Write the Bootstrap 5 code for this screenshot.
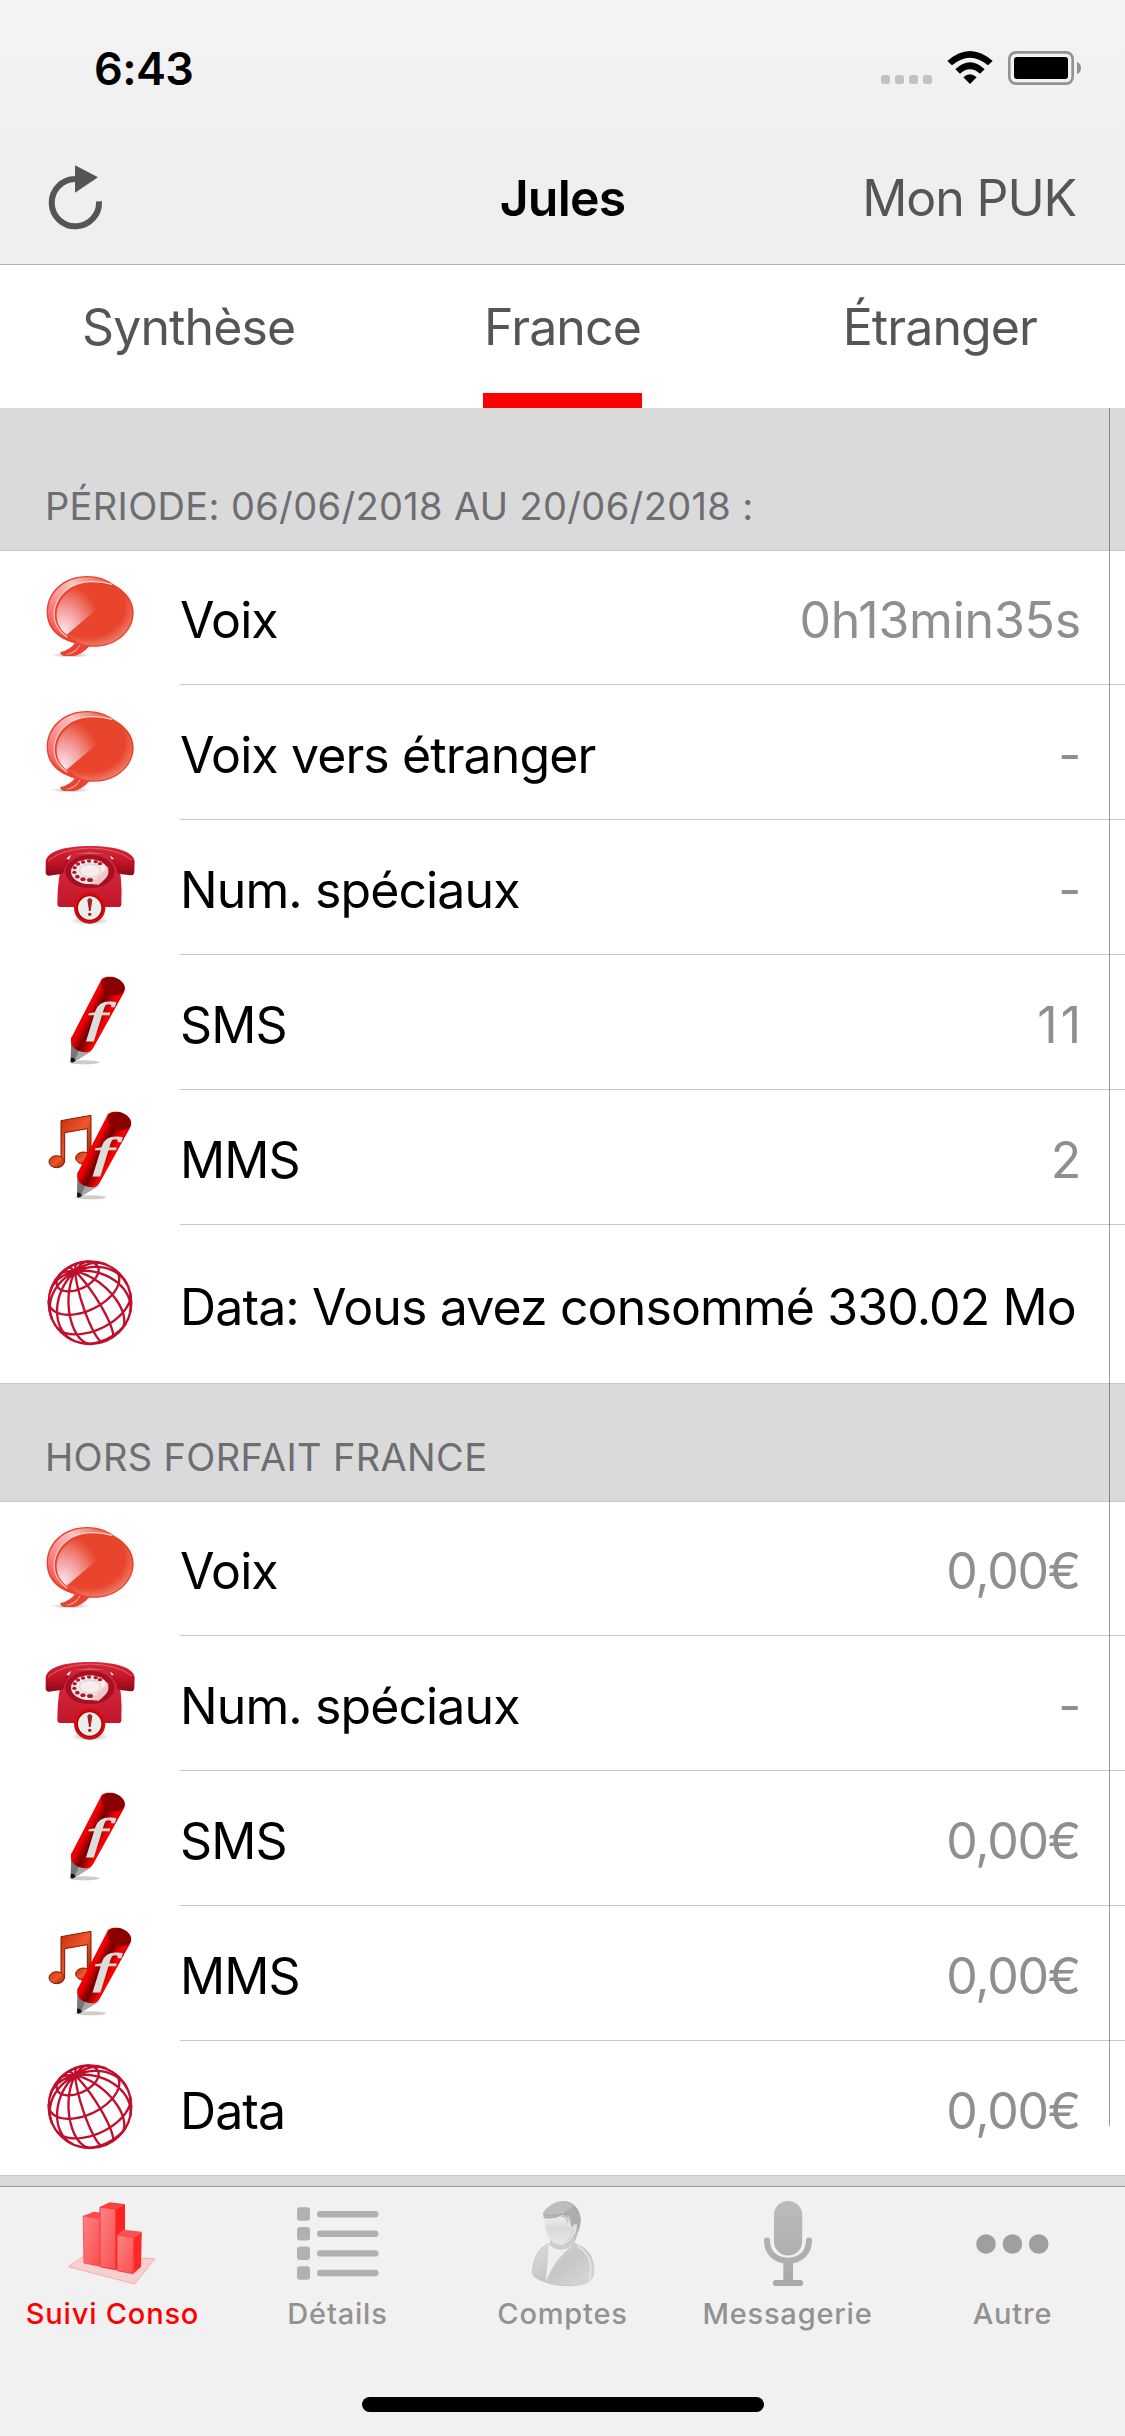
<!DOCTYPE html>
<html lang="fr">
<head>
  <meta charset="UTF-8">
  <meta name="viewport" content="width=device-width, initial-scale=1.0">
  <title>Suivi Conso</title>
  <link href="https://cdn.jsdelivr.net/npm/bootstrap@5.3.0/dist/css/bootstrap.min.css" rel="stylesheet">
  <style>
    body {
      font-family: Inter, "Liberation Sans", sans-serif;
      font-size: 50px;
      line-height: 60px;
      letter-spacing: -0.9px;
      color: #000;
      background: #dadada;
      width: 1125px;
      height: 2436px;
      overflow: hidden;
    }
    svg { display: block; flex-shrink: 0; }
    .icon-sprite { overflow: visible; }
    .top-bar {
      height: 265px;
      background: linear-gradient(#f4f4f4, #efefef 60%, #efefef);
      border-bottom: 1px solid #b2b2b2;
    }
    .status-row { height: 132px; padding: 5px 0 0 94px; }
    .clock { font-size: 45px; font-weight: 600; letter-spacing: -0.6px; }
    .title-row { height: 132px; }
    .title-row > div { width: 375px; }
    .title-row svg { margin-top: 4px; }
    .screen-title { font-weight: 600; letter-spacing: -0.8px; }
    .grey-text { color: #555; }
    .puk { padding-right: 49px; letter-spacing: -1.1px; }
    .tab-row { height: 143px; background: #fff; padding: 0 82px; }
    .tab-item { padding-top: 32px; color: #555; height: 143px; letter-spacing: -0.9px; }
    .tab-item.active { border-bottom: 15px solid #f00; width: 159px; }
    .tab-item:last-child { padding-right: 6px; }
    .section-title {
      font-size: 38px;
      line-height: 46px;
      letter-spacing: 0.35px;
      color: #6d6d72;
      padding: 0 45px 21px;
    }
    .first-title { height: 142px; }
    .second-title { height: 118px; border-top: 1px solid #c8c7cc; }
    .conso-list { background: #fff; border-top: 1px solid #c8c7cc; }
    .conso-row { height: 135px; padding-left: 30px; }
    .conso-row:first-child { height: 134px; }
    .conso-row:first-child svg { margin-top: -1px; }
    .conso-row svg { width: 130px; height: 135px; }
    .conso-text {
      margin-left: 20px;
      padding: 6px 45px 0 0;
      border-bottom: 1px solid #c8c7cc;
    }
    .conso-row:first-child .conso-text { padding-top: 4px; }
    .conso-row:last-child .conso-text { border-bottom: 0; }
    .conso-row.tall { height: 158px; }
    .conso-row.short { height: 134px; }
    .tall .conso-text { padding-top: 6px; letter-spacing: -0.87px; }
    .amount { color: #8e8e93; letter-spacing: -1.2px; }
    .amount.duration { letter-spacing: -0.2px; margin-right: -1px; }
    .amount.count { letter-spacing: 3px; margin-right: -4px; }
    .list-end { height: 11px; border-top: 1px solid #c8c7cc; }
    .scroll-line {
      position: absolute;
      left: 1109px;
      top: 408px;
      width: 1px;
      height: 1718px;
      background: rgba(0, 0, 0, 0.4);
    }
    .bottom-bar { height: 250px; background: #f1f1f1; border-top: 1px solid #999; }
    .bottom-item {
      font-size: 29px;
      font-weight: 500;
      line-height: 36px;
      letter-spacing: 0.8px;
      color: #929292;
      height: 210px;
    }
    .bottom-item.active { color: #f00; }
    .bottom-item svg { width: 225px; height: 108px; margin-bottom: 1px; }
    .home-line { width: 402px; height: 15px; border-radius: 8px; background: #000; }
  </style>
</head>
<body>
  <!-- Shared icons -->
  <svg width="0" height="0" class="icon-sprite position-absolute">
    <defs>
      <linearGradient id="rim" x1="0" y1="1" x2="1" y2="0">
        <stop offset="0" stop-color="#f0453a"/><stop offset=".35" stop-color="#fb8a90"/>
        <stop offset=".65" stop-color="#fbc3c0"/><stop offset="1" stop-color="#e9472f"/>
      </linearGradient>
      <radialGradient id="gloss" cx=".15" cy=".95" r="1">
        <stop offset="0" stop-color="#ffe6f2"/><stop offset=".5" stop-color="#f39b99"/><stop offset="1" stop-color="#e8452c"/>
      </radialGradient>
      <radialGradient id="bubble" cx=".42" cy=".38" r=".65">
        <stop offset=".75" stop-color="#e8452c"/><stop offset="1" stop-color="#ef7e6d"/>
      </radialGradient>
      <radialGradient id="shade">
        <stop offset="0" stop-color="#777" stop-opacity=".7"/><stop offset="1" stop-color="#999" stop-opacity="0"/>
      </radialGradient>
      <linearGradient id="phone" x1="0" y1="0" x2="0" y2="1">
        <stop offset="0" stop-color="#9e0d1c"/><stop offset=".35" stop-color="#d22438"/><stop offset="1" stop-color="#c0152a"/>
      </linearGradient>
      <linearGradient id="handset" x1="0" y1="0" x2="0" y2="1">
        <stop offset="0" stop-color="#d32a38"/><stop offset=".5" stop-color="#c41628"/><stop offset="1" stop-color="#8e0818"/>
      </linearGradient>
      <linearGradient id="pencil" gradientUnits="userSpaceOnUse" x1="150" y1="170" x2="240" y2="215">
        <stop offset="0" stop-color="#d80000"/><stop offset=".22" stop-color="#f40000"/><stop offset=".48" stop-color="#6d0000"/>
        <stop offset=".62" stop-color="#b80000"/><stop offset=".8" stop-color="#ff0000"/><stop offset="1" stop-color="#c40000"/>
      </linearGradient>
      <linearGradient id="note" x1="0" y1="0" x2="1" y2="1">
        <stop offset="0" stop-color="#c52e08"/><stop offset=".5" stop-color="#f0562c"/><stop offset="1" stop-color="#a31f04"/>
      </linearGradient>
      <linearGradient id="bar" x1="0" y1="0" x2="1" y2="1">
        <stop offset="0" stop-color="#fb8585"/><stop offset="1" stop-color="#fc4d4d"/>
      </linearGradient>
      <linearGradient id="coat" x1="0" y1="0" x2="1" y2="1">
        <stop offset="0" stop-color="#dedede"/><stop offset=".5" stop-color="#c6c6c6"/><stop offset="1" stop-color="#d9d9d9"/>
      </linearGradient>
      <linearGradient id="face" x1="0" y1="0" x2="0" y2="1">
        <stop offset="0" stop-color="#f0f0f0"/><stop offset=".45" stop-color="#dadada"/><stop offset="1" stop-color="#e6e6e6"/>
      </linearGradient>
      <linearGradient id="mic" gradientUnits="userSpaceOnUse" x1="0" y1="14" x2="0" y2="99">
        <stop offset="0" stop-color="#bbb"/><stop offset="1" stop-color="#a9a9a9"/>
      </linearGradient>
    </defs>

    <symbol id="icon-voix" viewBox="0 0 390 405">
      <ellipse cx="122" cy="315" rx="62" ry="8" fill="url(#shade)"/>
      <path d="M134 279Q124 298 90 307Q94 318 104 318H132Q158 312 178 289Z" fill="#e9432f"/>
      <path d="M149 284Q138 305 106 313H118Q140 307 151 285Z" fill="#f8a8a0"/>
      <path d="M172 78C100 78 50 126 50 186C50 240 90 268 134 280L178 290C250 296 311 250 311 188C311 150 285 122 250 103C230 86 202 78 172 78Z" fill="#e8442d"/>
      <path d="M170 82C105 83 54 128 54 186C54 226 80 250 110 263C78 240 68 212 72 182C78 132 125 96 180 94C205 93 228 96 248 103C226 89 200 82 170 82Z" fill="url(#rim)"/>
      <path d="M112 262C78 238 68 208 74 176C84 128 128 97 180 95Q215 93 246 103" fill="none" stroke="#fff" stroke-opacity=".75" stroke-width="3.5"/>
      <path d="M186 99C124 99 79 140 79 192C79 222 94 242 112 254C140 278 165 286 185 286C254 290 306 245 306 188C306 130 240 99 186 99Z" fill="url(#bubble)"/>
      <path d="M110 254C88 238 79 216 80 190C83 150 112 120 150 107Q200 115 198 180Z" fill="url(#gloss)"/>
    </symbol>

    <symbol id="icon-phone" viewBox="0 0 390 405">
      <ellipse cx="180" cy="302" rx="60" ry="14" fill="url(#shade)"/>
      <path d="M100 118L262 118Q278 170 274 254Q274 261 264 261H92Q82 261 82 252Q82 170 100 118Z" fill="url(#phone)"/>
      <path d="M47 126C50 92 110 78 180 78C250 78 310 92 314 124L313 156Q312 167 302 166L276 163Q258 160 258 144Q256 112 240 107Q225 98 180 98Q130 98 122 106Q106 112 104 138Q104 160 92 162L58 167Q48 167 47 158Z" fill="url(#handset)"/>
      <path d="M54 122Q100 86 180 84Q262 86 306 120" fill="none" stroke="#e4606a" stroke-width="3"/>
      <path d="M126 100H236L262 150Q256 205 180 210Q106 205 102 150Z" fill="#cf2338"/>
      <ellipse cx="180" cy="155" rx="74" ry="50" fill="#a90f21"/>
      <ellipse cx="179" cy="155" rx="56" ry="37" fill="#f6eaea"/>
      <path d="M180 192L235 140Q238 170 206 194Z" fill="#f0c4c8"/>
      <g fill="#b3182a">
        <ellipse cx="197" cy="125" rx="6.500" ry="5"/><ellipse cx="210" cy="131" rx="6.500" ry="5"/><ellipse cx="177" cy="123" rx="6.500" ry="5"/>
        <ellipse cx="159" cy="126" rx="6.500" ry="5"/><ellipse cx="144" cy="132" rx="6.500" ry="5"/><ellipse cx="134" cy="143" rx="6.500" ry="5"/>
        <ellipse cx="133" cy="157" rx="6.500" ry="5"/><ellipse cx="142" cy="170" rx="7" ry="5.500"/><ellipse cx="159" cy="178" rx="8" ry="6"/><ellipse cx="180" cy="180" rx="9" ry="6"/>
      </g>
      <ellipse cx="180" cy="152" rx="31" ry="20" fill="#f4eeee" stroke="#ccc" stroke-width="3"/>
      <circle cx="179" cy="264" r="47" fill="#d80c10"/>
      <circle cx="179" cy="264" r="37" fill="#ececec" stroke="#9e0a0c" stroke-width="4"/>
      <path d="M172 240Q179 228 187 240L182 273H177Z" fill="#a82025"/>
      <circle cx="179" cy="283" r="5" fill="#a82025"/>
    </symbol>

    <symbol id="icon-pencil" viewBox="0 0 390 405">
      <ellipse cx="163" cy="322" rx="46" ry="6" fill="#999" opacity=".5"/>
      <path d="M124 245L122 320L132 322L186 288Z" fill="#a9a9a9"/>
      <path d="M124 245L122 320L132 322L150 280Z" fill="#777"/>
      <path d="M123 308Q132 306 137 317L126 323Q122 322 122 318Z" fill="#111"/>
      <path d="M211 80C216 60 248 62 268 74C284 84 288 98 282 112L190 278C180 296 160 294 142 286C126 278 120 264 124 248Z" fill="url(#pencil)"/>
      <ellipse cx="249" cy="93" rx="36" ry="26" transform="rotate(22 249 93)" fill="#8a0000"/>
      <text x="169" y="232" font-family="Liberation Serif, serif" font-style="italic" font-size="124" textLength="60" lengthAdjust="spacingAndGlyphs" fill="#ddd" stroke="#ddd" stroke-width="3">f</text>
    </symbol>

    <symbol id="icon-mms" viewBox="0 0 390 405">
      <g fill="url(#note)" stroke="#7c1a05" stroke-width="3">
        <path d="M93 92L183 76V205H172V116L104 128V216H93Z"/>
        <ellipse cx="80" cy="215" rx="23" ry="18"/>
        <ellipse cx="160" cy="204" rx="23" ry="18"/>
      </g>
      <use href="#icon-pencil" x="19" y="0" width="390" height="405"/>
    </symbol>

    <symbol id="icon-globe" viewBox="0 0 390 405">
      <g fill="none" stroke="#c00f2c" stroke-width="7">
        <circle cx="180" cy="197" r="124"/>
        <path id="globe-grid" d=""/>
      </g>
    </symbol>
  </svg>

  <div class="top-bar">
    <div class="status-row d-flex align-items-center justify-content-between">
      <span class="clock">6:43</span>
      <svg width="265" height="80" viewBox="0 0 795 240">
        <g fill="#c2c2c2">
          <rect x="63" y="138" width="27" height="27" rx="8"/><rect x="105" y="138" width="27" height="27" rx="8"/>
          <rect x="147" y="138" width="27" height="27" rx="8"/><rect x="189" y="138" width="27" height="27" rx="8"/>
        </g>
        <path d="M262 96Q330 36 398 96L384 109Q330 63 276 109ZM286 121Q330 79 374 121L360 134Q330 108 300 134ZM310 145Q330 127 350 145L330 165Z"/>
        <rect x="448" y="70" width="190" height="94" rx="20" fill="none" stroke="#939393" stroke-width="8"/>
        <rect x="462" y="84" width="162" height="66" rx="9"/>
        <path d="M651 98Q663 104 663 117Q663 130 651 136Z" fill="#939393"/>
      </svg>
    </div>
    <div class="title-row d-flex align-items-center">
      <div>
        <svg width="130" height="100" viewBox="-90 0 390 300">
          <path d="M135 87A71 71 0 1 0 207 154" fill="none" stroke="#555" stroke-width="18"/>
          <path d="M135 46L204 82L135 128Z" fill="#555"/>
        </svg>
      </div>
      <div class="text-center screen-title">Jules</div>
      <div class="text-end grey-text puk">Mon PUK</div>
    </div>
  </div>

  <div class="tab-row d-flex">
    <div class="tab-item flex-fill w-25 text-start">Synthèse</div>
    <div class="tab-item active flex-shrink-0 text-center">France</div>
    <div class="tab-item flex-fill w-25 text-end">Étranger</div>
  </div>

  <div class="section-title first-title d-flex align-items-end">PÉRIODE: 06/06/2018 AU 20/06/2018 :</div>
  <div class="conso-list">
    <div class="conso-row d-flex align-items-center">
      <svg><use href="#icon-voix"/></svg>
      <div class="conso-text d-flex flex-grow-1 h-100 align-items-center justify-content-between"><span>Voix</span><span class="amount duration">0h13min35s</span></div>
    </div>
    <div class="conso-row d-flex align-items-center">
      <svg><use href="#icon-voix"/></svg>
      <div class="conso-text d-flex flex-grow-1 h-100 align-items-center justify-content-between"><span>Voix vers étranger</span><span class="amount">-</span></div>
    </div>
    <div class="conso-row d-flex align-items-center">
      <svg><use href="#icon-phone"/></svg>
      <div class="conso-text d-flex flex-grow-1 h-100 align-items-center justify-content-between"><span>Num. spéciaux</span><span class="amount">-</span></div>
    </div>
    <div class="conso-row d-flex align-items-center">
      <svg><use href="#icon-pencil"/></svg>
      <div class="conso-text d-flex flex-grow-1 h-100 align-items-center justify-content-between"><span>SMS</span><span class="amount count">11</span></div>
    </div>
    <div class="conso-row d-flex align-items-center">
      <svg><use href="#icon-mms"/></svg>
      <div class="conso-text d-flex flex-grow-1 h-100 align-items-center justify-content-between"><span>MMS</span><span class="amount">2</span></div>
    </div>
    <div class="conso-row tall d-flex align-items-center">
      <svg><use href="#icon-globe"/></svg>
      <div class="conso-text d-flex flex-grow-1 h-100 align-items-center text-nowrap"><span>Data: Vous avez consommé 330.02 Mo</span></div>
    </div>
  </div>

  <div class="section-title second-title d-flex align-items-end">HORS FORFAIT FRANCE</div>
  <div class="conso-list">
    <div class="conso-row d-flex align-items-center">
      <svg><use href="#icon-voix"/></svg>
      <div class="conso-text d-flex flex-grow-1 h-100 align-items-center justify-content-between"><span>Voix</span><span class="amount">0,00€</span></div>
    </div>
    <div class="conso-row d-flex align-items-center">
      <svg><use href="#icon-phone"/></svg>
      <div class="conso-text d-flex flex-grow-1 h-100 align-items-center justify-content-between"><span>Num. spéciaux</span><span class="amount">-</span></div>
    </div>
    <div class="conso-row d-flex align-items-center">
      <svg><use href="#icon-pencil"/></svg>
      <div class="conso-text d-flex flex-grow-1 h-100 align-items-center justify-content-between"><span>SMS</span><span class="amount">0,00€</span></div>
    </div>
    <div class="conso-row d-flex align-items-center">
      <svg><use href="#icon-mms"/></svg>
      <div class="conso-text d-flex flex-grow-1 h-100 align-items-center justify-content-between"><span>MMS</span><span class="amount">0,00€</span></div>
    </div>
    <div class="conso-row short d-flex align-items-center">
      <svg><use href="#icon-globe"/></svg>
      <div class="conso-text d-flex flex-grow-1 h-100 align-items-center justify-content-between"><span>Data</span><span class="amount">0,00€</span></div>
    </div>
  </div>
  <div class="list-end"></div>
  <div class="scroll-line"></div>

  <!-- Bottom tabs -->
  <div class="bottom-bar">
    <div class="row g-0 row-cols-5 text-center">
      <div class="col bottom-item active">
        <svg viewBox="0 0 225 108">
          <path d="M68.200 79.700L84 69L155 71.700L134.600 97Z" fill="#f6cfcf" stroke="#f9a0a0" stroke-width=".8"/>
          <path d="M83.200 29L93.600 24.700L101 25.700L99.300 31.700Z" fill="#fb4848"/>
          <path d="M83.200 29L99.300 31.700V79L84 76Z" fill="url(#bar)" stroke="#fd3c3c" stroke-width=".8"/>
          <path d="M115.700 22L125 17V43L117.500 48V82.500L115.700 82.700Z" fill="#ff2222"/>
          <path d="M100 20L109.600 15.300L125 17L115.700 22Z" fill="#fb4040"/>
          <path d="M100 20L115.700 22V82.700L100 79.700Z" fill="url(#bar)" stroke="#ff2a2a" stroke-width="1"/>
          <path d="M133.600 50.700L141.800 44.700L141 80L133.200 86.700Z" fill="#ff2828"/>
          <path d="M117.100 48L123.500 42.700L141.800 44.700L133.600 50.700Z" fill="#fb5050"/>
          <path d="M117.100 48L133.600 50.700L133.200 86.700L117.100 83.700Z" fill="url(#bar)" stroke="#fd3030" stroke-width=".8"/>
        </svg>
        Suivi Conso
      </div>
      <div class="col bottom-item">
        <svg viewBox="0 0 225 108" fill="#b1b1b1">
          <rect x="72" y="20.300" width="13" height="13.500" rx="3"/><rect x="92" y="24" width="61.500" height="6.400" rx="3.200"/>
          <rect x="72" y="40" width="13" height="13.500" rx="3"/><rect x="92" y="43.600" width="61.500" height="6.400" rx="3.200"/>
          <rect x="72" y="59.600" width="13" height="13.500" rx="3"/><rect x="92" y="63.200" width="61.500" height="6.400" rx="3.200"/>
          <rect x="72" y="79.200" width="13" height="13.500" rx="3"/><rect x="92" y="82.800" width="61.500" height="6.400" rx="3.200"/>
        </svg>
        Détails
      </div>
      <div class="col bottom-item">
        <svg viewBox="0 0 225 108">
          <g transform="translate(50 -7) scale(.33333)">
            <path d="M150 190C115 200 100 235 97 278Q100 296 137 306Q160 318 210 317C250 318 280 305 281 280C283 225 262 205 222 190Z" fill="url(#coat)" stroke="#bcbcbc" stroke-width="2"/>
            <path d="M146 192Q160 212 190 208Q210 204 220 194Q160 240 137 306Q144 250 146 192Z" fill="#efefef"/>
            <path d="M232 198Q262 215 270 245Q274 270 268 302" fill="none" stroke="#e2e2e2" stroke-width="6"/>
            <path d="M150 165V192Q166 212 190 207Q212 202 224 188V150Z" fill="#cdcdcd"/>
            <path d="M129 98Q150 66 188 63C222 64 242 90 242 122C242 148 228 168 225 186L205 110L134 118Q128 106 129 98Z" fill="#bdbdbd"/>
            <path d="M188 63C222 64 242 90 242 122Q240 142 228 160L214 136Q218 100 186 104L222 76Z" fill="#acacac"/>
            <path d="M134 114Q164 118 184 104Q198 104 206 130Q210 142 218 148Q214 176 188 192Q168 198 152 180Q134 156 134 114Z" fill="url(#face)"/>
            <path d="M130 102Q145 112 172 105Q196 96 206 120M131 111Q152 118 180 107Q198 108 205 130" fill="none" stroke="#a2a2a2" stroke-width="2.500"/>
            <path d="M216 142Q224 128 231 134Q232 152 221 168Z" fill="#ddd"/>
            <path d="M220 158Q212 188 182 193" fill="none" stroke="#f0f0f0" stroke-width="3"/>
          </g>
        </svg>
        Comptes
      </div>
      <div class="col bottom-item">
        <svg viewBox="0 0 225 108">
          <g fill="url(#mic)">
            <rect x="99" y="14" width="28.200" height="54.500" rx="14"/>
            <rect x="108.300" y="75" width="9.700" height="20"/>
            <rect x="98" y="93" width="30" height="6" rx="2.500"/>
          </g>
          <path d="M92 53.500C92 66 101 73.700 113 73.700S134 66 134 53.500" fill="none" stroke="#b0b0b0" stroke-width="6" stroke-linecap="round"/>
        </svg>
        Messagerie
      </div>
      <div class="col bottom-item">
        <svg viewBox="0 0 225 108" fill="#9f9f9f">
          <circle cx="86" cy="57" r="9.800"/><circle cx="112.400" cy="57" r="9.800"/><circle cx="138.700" cy="57" r="9.800"/>
        </svg>
        Autre
      </div>
    </div>
    <div class="home-line mx-auto"></div>
  </div>

  <script>
    // Draws the front half of the tilted globe grid
    var pole = [-0.357, -0.754, 0.551];
    var side = [0.904, -0.428, 0];
    var front = [
      pole[1] * side[2] - pole[2] * side[1],
      pole[2] * side[0] - pole[0] * side[2],
      pole[0] * side[1] - pole[1] * side[0]
    ];

    function project(colat, lon) {
      var c = colat * Math.PI / 180, l = lon * Math.PI / 180;
      return [0, 1, 2].map(function (i) {
        return Math.cos(c) * pole[i] + Math.sin(c) * (Math.cos(l) * side[i] + Math.sin(l) * front[i]);
      });
    }

    function trace(points) {
      var d = '', open = false;
      points.forEach(function (p) {
        if (p[2] < 0) { open = false; return; }
        d += (open ? 'L' : 'M') + (180 + p[0] * 124).toFixed(1) + ' ' + (197 + p[1] * 124).toFixed(1);
        open = true;
      });
      return d;
    }

    var grid = '';
    [33, 66, 99, 132].forEach(function (colat) {
      var ring = [];
      for (var a = 0; a <= 360; a += 4) ring.push(project(colat, a));
      grid += trace(ring);
    });
    for (var m = 0; m < 14; m++) {
      var line = [];
      for (var c = 0; c <= 176; c += 4) line.push(project(c, m * 360 / 14));
      grid += trace(line);
    }
    document.getElementById('globe-grid').setAttribute('d', grid);
  </script>
  <script src="https://cdn.jsdelivr.net/npm/bootstrap@5.3.0/dist/js/bootstrap.bundle.min.js"></script>
</body>
</html>
